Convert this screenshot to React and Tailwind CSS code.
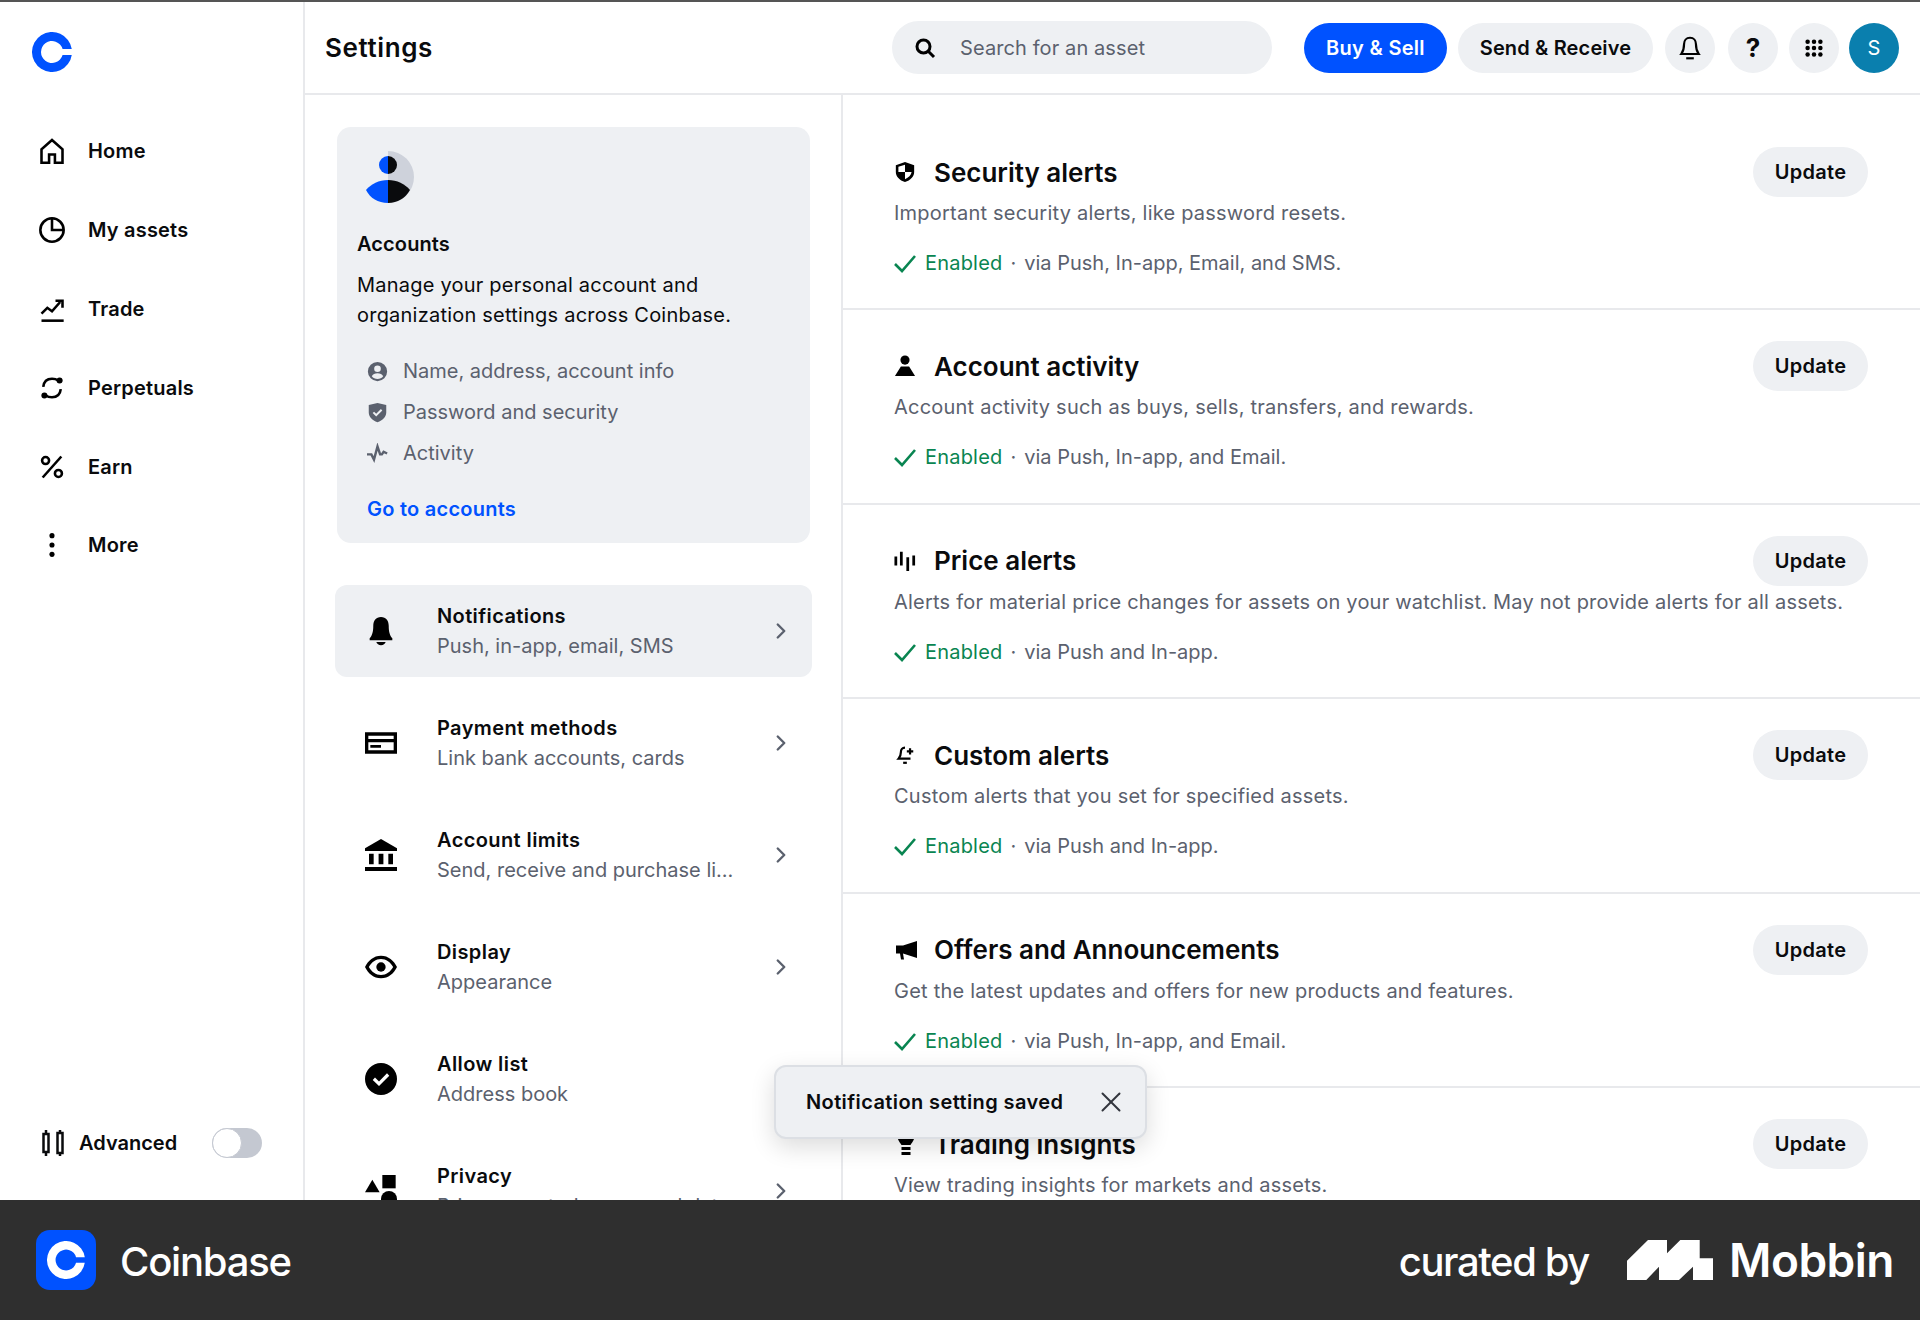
import { ChevronRight, X } from 'lucide-react'

const FONT = "font-['Inter','Noto_Sans',sans-serif]"

function CoinbaseMark({ className, fill = '#0052ff' }) {
  return (
    <svg viewBox="0 0 40 40" className={className}>
      <path fill={fill} d="M39.77 17A20 20 0 1 0 39.77 23H30.58A11 11 0 1 1 30.58 17Z" />
    </svg>
  )
}

function Stroke({ size = 28, children, width = 2.2, className = '' }) {
  return (
    <svg viewBox="0 0 24 24" width={size} height={size} fill="none" stroke="currentColor" strokeWidth={width} className={className}>
      {children}
    </svg>
  )
}

function Solid({ size = 32, children, className = '' }) {
  return (
    <svg viewBox="0 0 24 24" width={size} height={size} fill="currentColor" className={className}>
      {children}
    </svg>
  )
}

const navItems = [
  { label: 'Home', icon: <Stroke><path d="M3 22V10.5L12 2.5l9 8V22h-6.5v-7h-5v7z" /></Stroke> },
  { label: 'My assets', icon: <Stroke><circle cx="12" cy="12" r="10" /><path d="M12 2v10h10" /></Stroke> },
  { label: 'Trade', icon: <Stroke><path d="M3 22h19" /><path d="M3 16l5-5 4 3 7-8" /><path d="M15 5h6v6" /></Stroke> },
  {
    label: 'Perpetuals',
    icon: (
      <Stroke>
        <path d="M4.5 11C5 6.5 8 4 12 4c2 0 4 .6 5 1.5" />
        <path d="M19.5 13c-.5 4.5-3.5 7-7.5 7-2 0-4-.6-5-1.5" />
        <circle cx="18.5" cy="5.5" r="2.6" fill="currentColor" stroke="none" />
        <circle cx="5.5" cy="18.5" r="2.6" fill="currentColor" stroke="none" />
      </Stroke>
    ),
  },
  { label: 'Earn', icon: <Stroke><path d="M20 3L4 21" /><circle cx="6.5" cy="6.5" r="3" /><circle cx="17.5" cy="17.5" r="3" /></Stroke> },
  { label: 'More', icon: <Solid size={28}><circle cx="12" cy="4" r="2.2" /><circle cx="12" cy="12" r="2.2" /><circle cx="12" cy="20" r="2.2" /></Solid> },
]

const menuItems = [
  {
    title: 'Notifications',
    sub: 'Push, in-app, email, SMS',
    active: true,
    icon: <Solid><path d="M12 1.5c-3.8 0-5.8 2.9-5.8 6.5 0 4.5-.7 7-2.7 9.5V19h17v-1.5c-2-2.5-2.700-5-2.700-9.500 0-3.600-2-6.500-5.800-6.500z" /><path d="M8.5 20.3h7c-.4 1.5-1.8 2.4-3.5 2.4s-3.1-.9-3.500-2.400z" /></Solid>,
  },
  {
    title: 'Payment methods',
    sub: 'Link bank accounts, cards',
    icon: <Solid><path fillRule="evenodd" d="M0 4h24v16H0zM2.5 6.5V9h19V6.5zM2.5 11.5v6h19v-6zM4 13.5h8v2H4z" /></Solid>,
  },
  {
    title: 'Account limits',
    sub: 'Send, receive and purchase li...',
    icon: <Solid><path d="M12 0L0 7v2h24V7z" /><path d="M3 11h3.5v8H3zM10.2 11h3.600v8h-3.600zM17.500 11H21v8h-3.500zM0 21h24v3H0z" /></Solid>,
  },
  {
    title: 'Display',
    sub: 'Appearance',
    icon: <Solid><path fillRule="evenodd" d="M12 3.5C6.5 3.5 2.3 7.2 0 12c2.3 4.8 6.5 8.5 12 8.5s9.7-3.7 12-8.5c-2.3-4.8-6.5-8.5-12-8.500zM2.900 12C5 8.300 8.100 6 12 6s7 2.300 9.100 6c-2.100 3.700-5.200 6-9.100 6s-7-2.300-9.100-6z" /><circle cx="12" cy="12" r="3.5" /></Solid>,
  },
  {
    title: 'Allow list',
    sub: 'Address book',
    icon: <Solid><path fillRule="evenodd" d="M12 0a12 12 0 1 0 0 24 12 12 0 0 0 0-24zM10.5 17.2L5.8 12.7l1.7-1.8 3 2.900 6-6.100 1.700 1.800z" /></Solid>,
  },
  {
    title: 'Privacy',
    sub: 'Privacy controls, personal data',
    icon: <Solid><path d="M5.5 3.5L11 13H0z" /><path d="M13 0h10v10H13z" /><circle cx="18" cy="18" r="6" /></Solid>,
  },
]

const alerts = [
  {
    title: 'Security alerts',
    desc: 'Important security alerts, like password resets.',
    via: 'via Push, In-app, Email, and SMS.',
    icon: <Solid size={22}><path fillRule="evenodd" d="M12 1L2 4.5V12c0 5 4 9 10 11 6-2 10-6 10-11V4.500zM12 4v8h7.200c-.5 3.500-3.300 6.200-7.200 7.800V12H4.800V6.200z" /></Solid>,
  },
  {
    title: 'Account activity',
    desc: 'Account activity such as buys, sells, transfers, and rewards.',
    via: 'via Push, In-app, and Email.',
    icon: <Solid size={22}><circle cx="12" cy="5.5" r="5" /><path d="M7.5 12.5h9L23 23H1z" /></Solid>,
  },
  {
    title: 'Price alerts',
    desc: 'Alerts for material price changes for assets on your watchlist. May not provide alerts for all assets.',
    via: 'via Push and In-app.',
    icon: <Solid size={22}><path d="M0.5 7h3v10h-3zM6.500 2h3v15h-3zM13.500 8h3v15h-3zM20 6h3v11h-3z" /></Solid>,
  },
  {
    title: 'Custom alerts',
    desc: 'Custom alerts that you set for specified assets.',
    via: 'via Push and In-app.',
    icon: <Stroke size={22} width={2.4}><path d="M12 4c-3 0-4.500 2-4.500 5 0 3-.8 5-2.500 7h13" /><path d="M10 20.5h4" /><path d="M14 8h7M17.5 4.5v7" /></Stroke>,
  },
  {
    title: 'Offers and Announcements',
    desc: 'Get the latest updates and offers for new products and features.',
    via: 'via Push, In-app, and Email.',
    icon: <Solid size={24}><path d="M23 3L9 7.5H2v8h4l1 6h3l-1-6 14 4.500z" /></Solid>,
  },
  {
    title: 'Trading insights',
    desc: 'View trading insights for markets and assets.',
    via: 'via Push and In-app.',
    icon: <Solid size={24}><path d="M3 1h18c0 6-2.500 9-4.500 12h-9C5.500 10 3 7 3 1z" /><path d="M7.5 15h9v3h-9zM7.5 20h9v3h-9z" /></Solid>,
  },
]

function AccountsIcon() {
  return (
    <svg viewBox="0 0 48 52" width="48" height="52">
      <path fill="#ced2db" d="M22 0A26 26 0 0 1 22 52Z" />
      <path fill="#0052ff" d="M22 5A9 9 0 0 0 22 23Z" />
      <path fill="#0a0b0d" d="M22 5A9 9 0 0 1 22 23Z" />
      <path fill="#0052ff" d="M22 29C13 29 5 33 0 39C4 47 12 52 22 52Z" />
      <path fill="#0a0b0d" d="M22 29C31 29 39 33 44 39A26 26 0 0 1 22 52Z" />
    </svg>
  )
}

function MobbinMark() {
  return (
    <svg viewBox="0 0 86 40" width="86" height="40" fill="#fff">
      <path d="M0 40V20.7L21 0H40V13.3L53.3 0H72.7V18.3H86V40H66V26.7L52 40H32V26.7L19.3 40Z" />
    </svg>
  )
}

function Sidebar() {
  return (
    <aside className="flex h-full w-[305px] shrink-0 flex-col border-r-2 border-[#e8e9ec] pt-[30px]">
      <CoinbaseMark className="ml-[32px] h-[40px] w-[40px]" />
      <nav className="mt-[40px] flex flex-col">
        {navItems.map((item) => (
          <div key={item.label} className="flex h-[78.8px] items-center">
            <span className="flex w-[88px] pl-[38px]">{item.icon}</span>
            <span className="text-[20px] font-semibold tracking-[0.2px] text-[#0a0b0d]">{item.label}</span>
          </div>
        ))}
      </nav>
      <div className="mt-auto mb-[42px] flex items-center pl-[40px]">
        <svg viewBox="0 0 26 28" width="26" height="30" fill="none" stroke="#0a0b0d" strokeWidth="2.5">
          <path d="M6 1v4M6 23v4M20 1v3M20 24v3" />
          <rect x="3.5" y="5" width="5" height="18" />
          <rect x="17.5" y="4" width="5" height="20" />
        </svg>
        <span className="ml-[13px] text-[20px] font-semibold text-[#0a0b0d]">Advanced</span>
        <span className="ml-[35px] flex h-[30px] w-[50px] rounded-full bg-[#c4c8d1]">
          <span className="h-[30px] w-[30px] rounded-full border border-[#c4c8d1] bg-white" />
        </span>
      </div>
    </aside>
  )
}

function Header() {
  return (
    <header className="flex h-[93px] shrink-0 items-center border-b-2 border-[#e8e9ec] pr-[21px] pl-[20px]">
      <h1 className="text-[26px] font-semibold tracking-[0.6px] text-[#0a0b0d]">Settings</h1>
      <div className="ml-auto flex h-[53px] w-[380px] items-center rounded-full bg-[#eef0f3] pl-[21px]">
        <Stroke size={24} width={3}><circle cx="10.5" cy="10.5" r="6.5" /><path d="M15.5 15.5L21 21" /></Stroke>
        <span className="ml-[23px] text-[20px] tracking-[0.1px] text-[#5b616e]">Search for an asset</span>
      </div>
      <button className="ml-[32px] h-[50px] w-[143px] rounded-full bg-[#0052ff] text-[20px] font-semibold tracking-[0.3px] text-white">Buy &amp; Sell</button>
      <button className="ml-[11px] h-[50px] w-[195px] rounded-full bg-[#eef0f3] text-[20px] font-semibold tracking-[0.15px] text-[#0a0b0d]">Send &amp; Receive</button>
      <button className="ml-[12px] flex h-[50px] w-[50px] items-center justify-center rounded-full bg-[#eef0f3]">
        <Stroke size={26} width={2}><path d="M12 2.5c-3.5 0-5.5 2.7-5.5 6 0 4-.7 6.5-2.5 9h16c-1.8-2.500-2.500-5-2.500-9 0-3.300-2-6-5.500-6z" /><path d="M8.5 21.5h7" /></Stroke>
      </button>
      <button className="ml-[13px] flex h-[50px] w-[50px] items-center justify-center rounded-full bg-[#eef0f3] text-[26px] font-bold text-[#0a0b0d]">?</button>
      <button className="ml-[11px] flex h-[50px] w-[50px] items-center justify-center rounded-full bg-[#eef0f3]">
        <Solid size={18}>
          {[3.5, 12, 20.5].flatMap((cy) => [3.5, 12, 20.5].map((cx) => <circle key={`${cx}-${cy}`} cx={cx} cy={cy} r="3" />))}
        </Solid>
      </button>
      <div className="ml-[10px] flex h-[50px] w-[50px] items-center justify-center rounded-full bg-[#0a7fae] text-[20px] text-white">S</div>
    </header>
  )
}

function AccountsCard() {
  return (
    <section className="rounded-[14px] bg-[#eef0f3] px-[20px] pt-[24px] pb-[19px]">
      <div className="pl-[9px]"><AccountsIcon /></div>
      <h2 className="mt-[26px] text-[20px] leading-[30px] font-semibold tracking-[0.1px] text-[#0a0b0d]">Accounts</h2>
      <p className="mt-[11px] text-[20px] leading-[30px] tracking-[0.22px] text-[#0a0b0d]">
        Manage your personal account and organization settings across Coinbase.
      </p>
      <ul className="mt-[26px] flex flex-col gap-[11px] pl-[10px] text-[20px] leading-[30px] text-[#5b616e]">
        <li className="flex items-center gap-[15px]">
          <Solid size={21}><path fillRule="evenodd" d="M12 1a11 11 0 1 0 0 22 11 11 0 0 0 0-22zM12 5a3.8 3.8 0 1 1 0 7.6A3.8 3.8 0 0 1 12 5zM5.5 17.5c1-2.5 3.5-3.5 6.5-3.500s5.500 1 6.500 3.500c-1.500 2-3.800 3-6.500 3s-5-1-6.500-3z" /></Solid>
          Name, address, account info
        </li>
        <li className="flex items-center gap-[15px]">
          <Solid size={21}><path fillRule="evenodd" d="M12 1L2 3.5V12c0 5 4 9 10 11 6-2 10-6 10-11V3.500zM10.500 16.500L6.500 12.700l1.600-1.700 2.400 2.300 5.400-5.400 1.600 1.700z" /></Solid>
          Password and security
        </li>
        <li className="flex items-center gap-[15px]">
          <Stroke size={21} width={2.8}><path d="M0 13h5l3 6 4-15 3 9h2l2-3 4 2" /></Stroke>
          Activity
        </li>
      </ul>
      <a className="mt-[26px] block pl-[10px] text-[20px] leading-[30px] font-semibold tracking-[0.25px] text-[#0052ff]">Go to accounts</a>
    </section>
  )
}

function MenuList() {
  return (
    <div className="mt-[42px] flex flex-col gap-[20px]">
      {menuItems.map((item) => (
        <div key={item.title} className={`-mx-[2px] flex h-[92px] shrink-0 items-center rounded-[12px] pr-[18px] pl-[30px] ${item.active ? 'bg-[#eef0f3]' : ''}`}>
          <span className="w-[72px] shrink-0">{item.icon}</span>
          <div className="min-w-0 flex-1">
            <div className="text-[20px] leading-[30px] font-semibold tracking-[0.4px] text-[#0a0b0d]">{item.title}</div>
            <div className="truncate text-[20px] leading-[30px] text-[#5b616e]">{item.sub}</div>
          </div>
          <ChevronRight size={26} strokeWidth={2.2} className="shrink-0 text-[#5b616e]" />
        </div>
      ))}
    </div>
  )
}

function AlertSection({ alert, first }) {
  return (
    <section className={`shrink-0 border-b-2 border-[#e8e9ec] pr-[52px] pl-[51px] ${first ? 'h-[215px] pt-[52px]' : 'h-[194.5px] pt-[31px]'}`}>
      <div className="flex h-[50px] items-center justify-between">
        <div className="flex items-center">
          <span className="flex w-[40px] shrink-0 justify-start">{alert.icon}</span>
          <h3 className="text-[26px] font-semibold text-[#0a0b0d]">{alert.title}</h3>
        </div>
        <button className="h-[50px] w-[115px] rounded-full bg-[#eef0f3] text-[20px] font-semibold tracking-[0.3px] text-[#0a0b0d]">Update</button>
      </div>
      <p className="mt-[1px] text-[20px] leading-[30px] tracking-[0.22px] whitespace-nowrap text-[#5b616e]">{alert.desc}</p>
      <div className="mt-[20px] flex items-center text-[20px] leading-[30px]">
        <svg viewBox="0 0 24 24" width="24" height="24" fill="none" stroke="#098551" strokeWidth="2.6" className="-ml-[1px]"><path d="M2 13l7 7L22 5" /></svg>
        <span className="ml-[8px] tracking-[0.2px] text-[#098551]">Enabled</span>
        <span className="mx-[8px] text-[#5b616e]">·</span>
        <span className="text-[#5b616e]">{alert.via}</span>
      </div>
    </section>
  )
}

function Footer() {
  return (
    <footer className="flex h-[120px] shrink-0 items-center justify-between bg-[#2f2f2f] pr-[26px] pl-[36px] text-white">
      <div className="flex items-center">
        <span className="flex h-[60px] w-[60px] items-center justify-center rounded-[14px] bg-[#0052ff]">
          <CoinbaseMark className="h-[38px] w-[38px]" fill="#fff" />
        </span>
        <span className="ml-[24px] pt-[4px] text-[40px] font-medium tracking-[-1.2px]">Coinbase</span>
      </div>
      <div className="flex items-center">
        <span className="pt-[4px] text-[40px] font-medium tracking-[-1.4px]">curated by</span>
        <span className="ml-[38px]"><MobbinMark /></span>
        <span className="ml-[16px] text-[46px] font-semibold tracking-[-0.5px]">Mobbin</span>
      </div>
    </footer>
  )
}

export default function App() {
  return (
    <div className={`flex h-[1320px] w-[1920px] flex-col overflow-hidden bg-white ${FONT}`}>
      <div className="relative flex h-[1200px] shrink-0 overflow-hidden border-t-2 border-[#555]">
        <Sidebar />
        <main className="flex min-w-0 flex-1 flex-col">
          <Header />
          <div className="flex min-h-0 flex-1">
            <div className="w-[538px] shrink-0 border-r-2 border-[#e8e9ec] pt-[32px] pr-[31px] pl-[32px]">
              <AccountsCard />
              <MenuList />
            </div>
            <div className="flex min-w-0 flex-1 flex-col">
              {alerts.map((alert, i) => (
                <AlertSection key={alert.title} alert={alert} first={i === 0} />
              ))}
            </div>
          </div>
        </main>
        <div className="absolute top-[1063px] left-[774px] flex h-[74px] w-[373px] items-center justify-between rounded-[12px] border-2 border-[#dcdfe4] bg-[#eef0f3] pr-[17px] pl-[30px] shadow-[0_8px_24px_rgba(0,0,0,0.14)]">
          <span className="text-[20px] font-semibold tracking-[0.4px] text-[#0a0b0d]">Notification setting saved</span>
          <X size={34} strokeWidth={1.4} className="text-[#32353d]" />
        </div>
      </div>
      <Footer />
    </div>
  )
}
